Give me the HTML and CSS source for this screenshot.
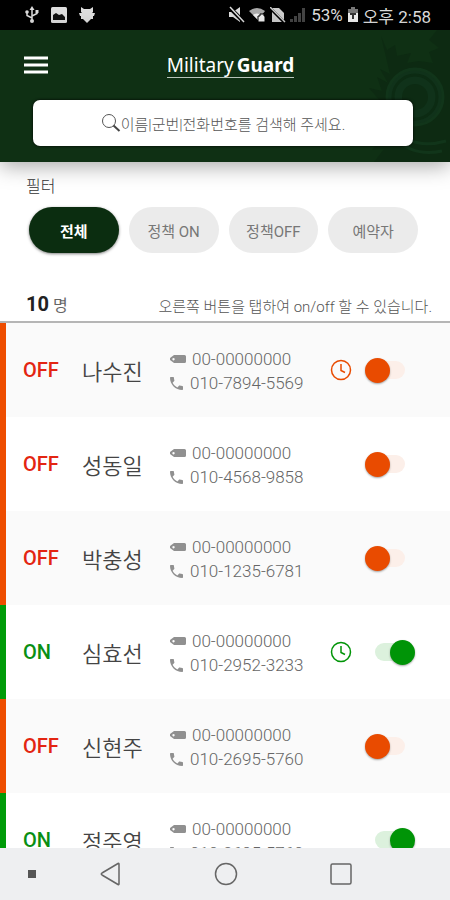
FILE: index.html
```html
<!DOCTYPE html>
<html lang="ko">
<head>
<meta charset="utf-8">
<meta name="viewport" content="width=device-width, initial-scale=1">
<title>Military Guard</title>
<link rel="stylesheet" href="styles.css">
</head>
<body>
<svg class="sprite" aria-hidden="true">
  <symbol id="tag" viewBox="0 0 16 10"><path fill="currentColor" fill-rule="evenodd" d="M4 1h10.500q1.500 0 1.500 1.500v5q0 1.500-1.500 1.500H4L0 6V4zM3.500 4a1.200 1.200 0 1 0 .01 0z"/></symbol>
  <symbol id="phone" viewBox="3 3 18 18"><path fill="currentColor" d="M6.620 10.790c1.440 2.830 3.760 5.140 6.590 6.590l2.200-2.200c.27-.27.67-.36 1.020-.24 1.120.37 2.330.57 3.570.57.550 0 1 .45 1 1V20c0 .55-.45 1-1 1C10.610 21 3 13.390 3 4c0-.55.450-1 1-1h3.500c.55 0 1 .45 1 1 0 1.250.2 2.450.57 3.570.110.350.030.740-.25 1.020z"/></symbol>
  <symbol id="clock" viewBox="0 0 22 22"><g fill="none" stroke="currentColor" stroke-width="1.500"><circle cx="11" cy="11" r="9.500"/><path d="M11 5v6.500l4 2"/></g></symbol>
</svg>
<div class="app">
  <div class="status">
    <div class="status-group notices">
      <svg width="14" height="18" viewBox="0 0 14 18"><g fill="none" stroke="#ddd" stroke-width="1.500"><path d="M7 15V3M7 12L2 9.500V6M7 10l5-2.500V5"/></g><g fill="#ddd"><path d="M4.500 4L7 0l2.500 4zM10.500 4h3v3h-3z"/><circle cx="2" cy="6" r="1.800"/><circle cx="7" cy="15" r="2"/></g></svg>
      <svg width="16" height="16" viewBox="0 0 16 16"><rect width="16" height="16" rx="1.500" fill="#ddd"/><path d="M2 13V8l3-2 3 2 3-1 3 3v3z" fill="#111"/></svg>
      <svg width="16" height="16" viewBox="0 0 16 16"><path fill="#ddd" d="M2 0l3 2h6l3-2v5l-1 1h3l-1 3h-1v3h-2l-4 4-4-4H2V9H1L0 6h3L2 5z"/></svg>
    </div>
    <div class="status-group">
      <svg width="17" height="18" viewBox="0 0 17 18"><path fill="#ddd" d="M1 6h4l7-5v15l-7-5H1z"/><path d="M1 1l15 15" stroke="#000" stroke-width="4"/><path d="M2 1l14 15" stroke="#ddd" stroke-width="1.500"/></svg>
      <svg width="17" height="16" viewBox="0 0 17 16"><path fill="#aaa" d="M0 4q8-6 16 0L9 13z"/><path fill="#eee" d="M4 8q4-3 8 0l-3 5z"/><path fill="#eee" stroke="#000" d="M9 9h2V7h4v2h1v6H9z"/></svg>
      <svg width="16" height="16" viewBox="0 0 16 16"><path fill="#ccc" d="M2 1h7l5 5v9H2z"/><path d="M0 1l15 15" stroke="#000" stroke-width="3"/><path d="M0 0l15 15" stroke="#ccc" stroke-width="1.500"/></svg>
      <svg width="17" height="16" viewBox="0 0 17 16"><path fill="#444" d="M0 12h3v3H0zM4 9h3v6H4zM8 6h3v9H8zM12 1h3v14h-3z"/></svg>
      <span class="battery">53%</span>
      <svg width="12" height="16" viewBox="0 0 12 16"><path fill="#777" d="M4 0h4v2h3v4H1V2h3z"/><path fill="#eee" d="M1 6h10v9H1z"/><path d="M3 6h6v2H7v4H5V8H3z" fill="#333"/></svg>
      <span>오후 2:58</span>
    </div>
  </div>
  <header class="header">
    <svg class="crest" viewBox="0 0 96 132" aria-hidden="true">
      <path fill="#0d2a12" d="M27 6l6 14 8-5 2 11 14-3-4 10 12-2 14 2-4-11 10-4-10-8 8-10h13v132H20l10-13-12 1 9-12-12-5 11-8-14-6 13-6-11-10 13-1-12-14 13 3-5-14 11 6-8-14 10 5z"/>
      <g fill="none" stroke="#11351a" stroke-width="3"><circle cx="61" cy="67" r="28" fill="#10321a"/><circle cx="61" cy="67" r="22" stroke="#0c2b13"/><path d="M35 95q22 26 57 16M42 109q18 18 46 12"/></g>
      <circle cx="61" cy="67" r="13" fill="#0d2b13"/>
    </svg>
    <div class="bar">
      <button class="menu" type="button" aria-label="메뉴"><svg width="24" height="18" viewBox="0 0 24 18"><path stroke="#fff" stroke-width="3" d="M0 2h24M0 9h24M0 16h24"/></svg></button>
      <h1 class="logo">Military<b>Guard</b></h1>
    </div>
    <label class="search">
      <svg width="20" height="20" viewBox="0 0 20 20" fill="none"><circle cx="8" cy="8" r="6.500" stroke="#555"/><path d="M12.500 12.500l6 5.500" stroke="#444" stroke-width="2"/></svg>
      <input type="text" placeholder="이름|군번|전화번호를 검색해 주세요." aria-label="검색">
    </label>
  </header>
  <section class="filters">
    <h2>필터</h2>
    <div class="chips">
      <button class="chip active" type="button">전체</button>
      <button class="chip" type="button">정책 ON</button>
      <button class="chip" type="button">정책OFF</button>
      <button class="chip" type="button">예약자</button>
    </div>
  </section>
  <div class="summary">
    <p class="count"><b>10</b> 명</p>
    <p class="hint">오른쪽 버튼을 탭하여 on/off 할 수 있습니다.</p>
  </div>
  <ul class="list">
    <li class="row off"><span class="state">OFF</span><span class="name">나수진</span><div class="info"><span><svg class="i-tag"><use href="#tag"/></svg>00-00000000</span><span><svg class="i-phone"><use href="#phone"/></svg>010-7894-5569</span></div><svg class="clock"><use href="#clock"/></svg><input class="switch" type="checkbox" role="switch" aria-label="나수진"></li>
    <li class="row off"><span class="state">OFF</span><span class="name">성동일</span><div class="info"><span><svg class="i-tag"><use href="#tag"/></svg>00-00000000</span><span><svg class="i-phone"><use href="#phone"/></svg>010-4568-9858</span></div><input class="switch" type="checkbox" role="switch" aria-label="성동일"></li>
    <li class="row off"><span class="state">OFF</span><span class="name">박충성</span><div class="info"><span><svg class="i-tag"><use href="#tag"/></svg>00-00000000</span><span><svg class="i-phone"><use href="#phone"/></svg>010-1235-6781</span></div><input class="switch" type="checkbox" role="switch" aria-label="박충성"></li>
    <li class="row on"><span class="state">ON</span><span class="name">심효선</span><div class="info"><span><svg class="i-tag"><use href="#tag"/></svg>00-00000000</span><span><svg class="i-phone"><use href="#phone"/></svg>010-2952-3233</span></div><svg class="clock"><use href="#clock"/></svg><input class="switch" type="checkbox" role="switch" aria-label="심효선" checked></li>
    <li class="row off"><span class="state">OFF</span><span class="name">신현주</span><div class="info"><span><svg class="i-tag"><use href="#tag"/></svg>00-00000000</span><span><svg class="i-phone"><use href="#phone"/></svg>010-2695-5760</span></div><input class="switch" type="checkbox" role="switch" aria-label="신현주"></li>
    <li class="row on"><span class="state">ON</span><span class="name">정주영</span><div class="info"><span><svg class="i-tag"><use href="#tag"/></svg>00-00000000</span><span><svg class="i-phone"><use href="#phone"/></svg>010-2695-5760</span></div><input class="switch" type="checkbox" role="switch" aria-label="정주영" checked></li>
  </ul>
  <nav class="nav">
    <span class="dot"></span>
    <div class="keys">
      <button type="button" aria-label="뒤로"><svg width="24" height="24" viewBox="0 0 24 24"><path d="M20 2v20q0 1-1 .5L3 13q-1.500-1 0-2L19 1.500q1-.5 1 .5z"/></svg></button>
      <button type="button" aria-label="홈"><svg width="24" height="24" viewBox="0 0 24 24"><circle cx="12" cy="12" r="10.500"/></svg></button>
      <button type="button" aria-label="최근 앱"><svg width="24" height="24" viewBox="0 0 24 24"><rect x="2" y="2" width="20" height="20" rx="1.500"/></svg></button>
    </div>
  </nav>
</div>
</body>
</html>
```
FILE: styles.css
```css
* { box-sizing: border-box; margin: 0; padding: 0; }
body { font-family: Roboto, "Noto Sans CJK KR", sans-serif; color: #666; background: #fff; }
button, input { font: inherit; border: 0; background: none; }
svg { flex: none; display: block; }
.sprite { position: absolute; width: 0; height: 0; }
.app { display: flex; flex-direction: column; height: 100vh; overflow: hidden; }

.status { flex: none; display: flex; justify-content: space-between; height: 30px; padding: 0 19px 0 25px; background: #000; color: #ddd; font-size: 17px; }
.status-group { display: flex; align-items: center; gap: 4px; white-space: nowrap; }
.notices { gap: 12px; }
.battery { font-size: 17px; }

.header { flex: none; position: relative; display: flex; flex-direction: column; justify-content: space-between; height: 132px; padding: 20px 37px 16px 24px; background: #0f3014; box-shadow: 0 4px 20px rgba(0, 0, 0, .35); }
.crest { position: absolute; top: 0; right: 0; width: 96px; height: 132px; }
.bar { position: relative; display: flex; align-items: center; height: 30px; }
.menu { display: flex; align-items: center; width: 24px; height: 30px; }
.logo { display: flex; gap: 3px; margin: 0 auto; border-bottom: 1px solid #b8c4ba; color: #fff; font: 400 19px/24px "Noto Sans", sans-serif; }
.search { position: relative; display: flex; align-items: center; justify-content: center; height: 46px; margin-left: 9px; border-radius: 7px; background: #fff; box-shadow: 0 0 3px #000; }
.search input { field-sizing: content; height: 40px; outline: 0; color: #555; font-size: 15px; font-weight: 300; }
.search input::placeholder { color: #555; opacity: 1; }

.filters { padding: 12px 32px 0 26px; }
.filters h2 { color: #333; font-size: 16px; line-height: 26px; font-weight: 300; }
.chips { display: grid; grid-template-columns: repeat(4, 1fr); gap: 10px; margin: 7px 0 0 3px; }
.chip { height: 46px; border-radius: 23px; background: #ebebeb; color: #777; font-size: 15px; }
.chip.active { background: #0b2d10; color: #fff; font-weight: 700; box-shadow: 0 1px 3px rgba(0, 0, 0, .5); }

.summary { flex: none; display: flex; justify-content: space-between; align-items: flex-end; height: 70px; padding: 0 18px 2px 26px; border-bottom: 2px solid #b5b5b5; white-space: nowrap; }
.count { font-size: 16px; line-height: 26px; }
.count b { font-size: 20px; font-weight: 700; color: #222; }
.hint { color: #555; font-size: 15px; line-height: 24px; font-weight: 300; }

.list { flex: 1; min-height: 0; overflow: hidden; list-style: none; }
.row { display: flex; align-items: center; height: 94px; padding: 0 35px 0 17px; border-left: 6px solid var(--bar); background: #fff; }
.row:nth-child(odd) { background: #fafafa; }
.off { --bar: #ee4d00; --knob: #e94b00; --track: #fcefe9; --state: #e32512; }
.on { --bar: #009b08; --knob: #009407; --track: #dcf1dd; --state: #0a8f14; }
.state { width: 59px; font-size: 20px; font-weight: 500; color: var(--state); }
.name { width: 88px; font-size: 22px; font-weight: 350; color: #444; white-space: nowrap; }
.info { flex: 1; padding-top: 2px; font-size: 17px; line-height: 24px; font-weight: 300; color: #666; }
.info span { display: flex; align-items: center; white-space: nowrap; }
.i-tag { width: 16px; height: 10px; margin-right: 6px; color: #909090; }
.i-phone { width: 13px; height: 13px; margin-right: 7px; color: #909090; }
.clock { width: 22px; height: 22px; margin-right: 13px; color: var(--knob); }
.switch { appearance: none; flex: none; position: relative; display: flex; align-items: center; width: 50px; height: 26px; }
.switch::before { content: ""; width: 30px; height: 18px; margin: 0 auto; border-radius: 9px; background: var(--track); }
.switch::after { content: ""; position: absolute; left: 0; width: 25px; height: 25px; border-radius: 50%; background: var(--knob); box-shadow: 0 1px 2px rgba(0, 0, 0, .35); }
.switch:checked::after { left: auto; right: 0; }

.nav { flex: none; display: flex; align-items: center; gap: 63px; height: 52px; padding: 0 97px 0 28px; background: #eeeff1; }
.keys { flex: 1; display: flex; justify-content: space-between; }
.nav svg { fill: none; stroke: #666; stroke-width: 1.500; }
.dot { width: 8px; height: 8px; background: #555; }
```
